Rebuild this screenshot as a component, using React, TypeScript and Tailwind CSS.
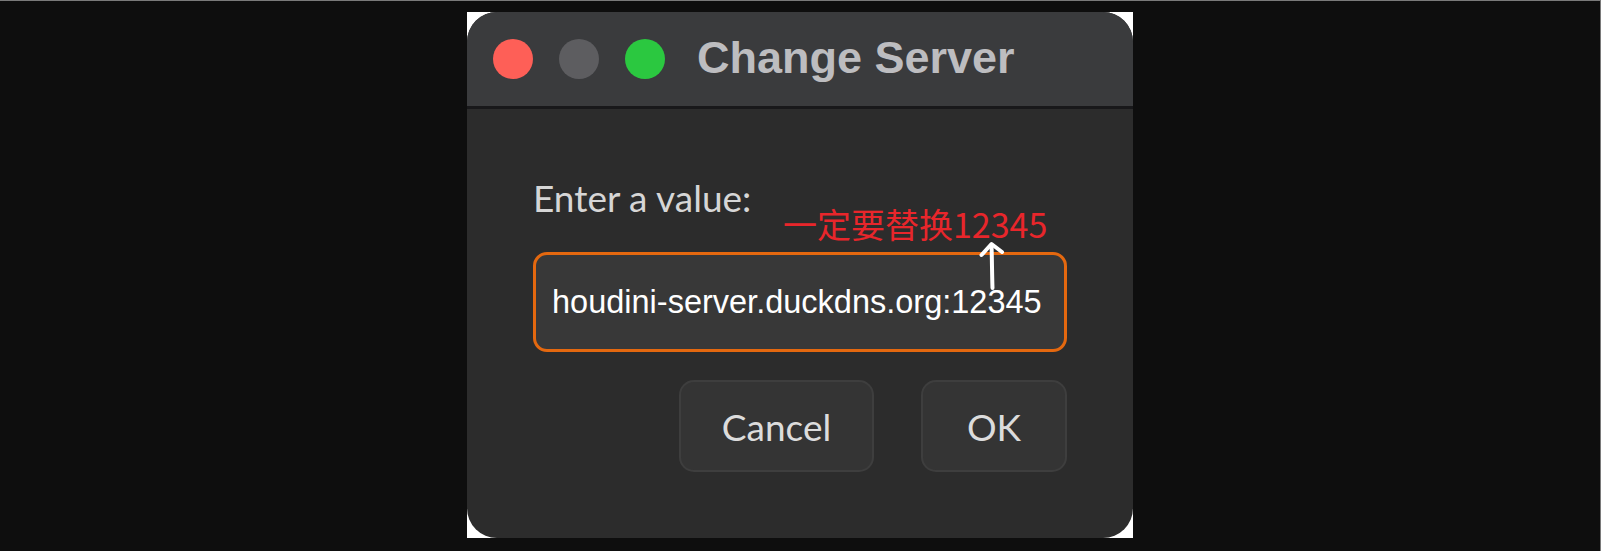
import React from 'react';

function TrafficLights() {
    return (
        <div className="flex items-center gap-[26px]">
            <span className="w-[40px] h-[40px] rounded-full bg-[#fe5f57]" />
            <span className="w-[40px] h-[40px] rounded-full bg-[#5d5d60]" />
            <span className="w-[40px] h-[40px] rounded-full bg-[#2bc840]" />
        </div>
    );
}

function HintArrow() {
    return (
        <svg
            width="30"
            height="52"
            viewBox="0 0 30 52"
            fill="none"
            stroke="#ffffff"
            strokeWidth="4"
            strokeLinecap="round"
            strokeLinejoin="round"
            className="absolute left-[511px] top-[228px]"
        >
            <path d="M14.5 48 C14 34 14 20 13.5 5" />
            <path d="M3.5 15 L13.5 4 L24 12" />
        </svg>
    );
}

export default function App() {
    return (
        <div className="w-full h-[551px] bg-[#0e0e0e] border-t border-r border-[#7a7a7a] pl-[467px] pt-[11px]">
            <div className="relative w-[666px] h-[526px] bg-white">
                <div className="w-full h-full rounded-[30px] overflow-hidden bg-[#2c2c2c] flex flex-col">
                    {/* Title bar */}
                    <div className="h-[94px] shrink-0 bg-[#3a3b3d] flex items-center pl-[26px] gap-[32px]">
                        <TrafficLights />
                        <h1 className="text-[45px] leading-none font-bold text-[#bdbdc0] font-['Liberation_Sans',Arial,sans-serif] pb-[4px]">
                            Change Server
                        </h1>
                    </div>
                    <div className="h-[3px] shrink-0 bg-[#18181a]" />

                    {/* Body */}
                    <div className="flex-1 flex flex-col px-[66px] pt-[70px] font-['Lato','Noto_Sans',sans-serif]">
                        <label className="text-[37px] leading-none text-[#d6d6d6]">Enter a value:</label>
                        <div className="mt-[36px] h-[100px] border-[3px] border-[#e4680f] rounded-[14px] bg-[#383838] flex items-center px-[16px]">
                            <span className="text-[32.5px] leading-none text-white font-['Liberation_Sans',Arial,sans-serif]">
                                houdini-server.duckdns.org:12345
                            </span>
                        </div>
                        <div className="mt-[28px] flex justify-end gap-[47px]">
                            <button className="w-[195px] h-[92px] rounded-[15px] bg-[#343434] border-2 border-[#3e3e3e] text-[37px] leading-none text-[#dcdcdc]">
                                Cancel
                            </button>
                            <button className="w-[146px] h-[92px] rounded-[15px] bg-[#343434] border-2 border-[#3e3e3e] text-[37px] leading-none text-[#dcdcdc]">
                                OK
                            </button>
                        </div>
                    </div>
                </div>

                {/* Annotation */}
                <span className="absolute left-[316px] top-[195px] text-[34px] leading-none font-normal text-[#e8262b] font-['Noto_Sans_CJK_SC','Noto_Sans',sans-serif] whitespace-nowrap">
                    一定要替换12345
                </span>
                <HintArrow />
            </div>
        </div>
    );
}
